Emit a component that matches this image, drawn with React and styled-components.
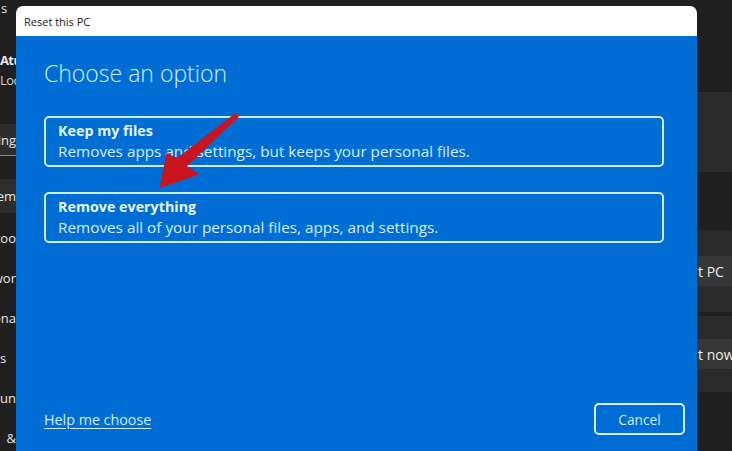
import React from 'react';
import styled, { createGlobalStyle } from 'styled-components';

const GlobalStyle = createGlobalStyle`
  html, body {
    margin: 0;
    padding: 0;
    background: #1f1f1f;
    overflow: hidden;
  }
  body {
    font-family: "Open Sans", "Noto Sans", sans-serif;
  }
`;

const Page = styled.div`
  width: 732px;
  height: 451px;
  display: grid;
  grid-template-columns: 16px 681px 1fr;
  background: #1f1f1f;
  overflow: hidden;
`;

// ---- settings window behind the dialog ----
const LeftStrip = styled.div`
  display: flex;
  flex-direction: column;
  overflow: hidden;
  color: #e6e6e6;
  font-size: 13px;
`;

const Frag = styled.div`
  display: flex;
  justify-content: ${p => (p.$end ? 'flex-end' : 'flex-start')};
  align-items: center;
  white-space: nowrap;
  height: ${p => p.$h || 20}px;
  margin-top: ${p => p.$mt || 0}px;
  padding-left: ${p => p.$pl || 0}px;
  font-weight: ${p => (p.$bold ? 700 : 400)};
  font-size: ${p => p.$size || 13}px;
  letter-spacing: ${p => (p.$tight ? '-0.6px' : '0')};
  background: ${p => p.$bg || 'transparent'};
  border-bottom: ${p => (p.$line ? '1px solid #8a8a8a' : 'none')};
  color: ${p => (p.$dim ? '#cfcfcf' : 'inherit')};
`;

const RightStrip = styled.div`
  display: flex;
  flex-direction: column;
  overflow: hidden;
  padding-top: 92px;
`;

const Panel = styled.div`
  background: #2b2b2b;
  height: ${p => p.$h}px;
  display: flex;
  flex-direction: column;
  justify-content: center;
`;

const Gap = styled.div`
  height: ${p => p.$h}px;
`;

const GhostButton = styled.div`
  background: #373737;
  height: 30px;
  display: flex;
  align-items: center;
  white-space: nowrap;
  color: #ececec;
  font-size: 14px;
  padding-left: 1px;
`;

// ---- dialog ----
const Dialog = styled.div`
  margin-top: 6px;
  display: flex;
  flex-direction: column;
  border-radius: 7px 7px 0 0;
  overflow: hidden;
  height: 445px;
  position: relative;
`;

const TitleBar = styled.div`
  height: 30px;
  flex: none;
  background: #ffffff;
  color: #1a1a1a;
  font-size: 11px;
  display: flex;
  align-items: center;
  padding-left: 8px;
`;

const Body = styled.div`
  flex: 1;
  background: #006dd5;
  color: #d4f0ff;
  display: flex;
  flex-direction: column;
`;

const Heading = styled.h1`
  margin: 22px 0 0 28px;
  font-size: 23px;
  line-height: 30px;
  font-weight: 300;
  color: #d4f0ff;
`;

const OptionList = styled.div`
  margin: 28px 33px 0 28px;
  display: flex;
  flex-direction: column;
  gap: 25px;
`;

const OptionCard = styled.div`
  border: 2px solid #c9ecff;
  border-radius: 5px;
  padding: 3px 12px 4px;
  cursor: pointer;
`;

const OptionTitle = styled.div`
  font-weight: 700;
  font-size: 14.3px;
  line-height: 20px;
  color: #e4f6ff;
`;

const OptionDesc = styled.div`
  font-size: 15.3px;
  line-height: 20px;
`;

const Footer = styled.div`
  margin-top: auto;
  padding: 0 12px 16px 28px;
  display: flex;
  align-items: center;
  justify-content: space-between;
`;

const HelpLink = styled.a`
  color: #cdeeff;
  font-size: 14.3px;
  text-decoration: underline;
  text-underline-offset: 3px;
  cursor: pointer;
`;

const CancelButton = styled.button`
  width: 91px;
  height: 32px;
  border: 2px solid #d4f0ff;
  border-radius: 5px;
  background: transparent;
  color: #d4f0ff;
  font-family: inherit;
  font-size: 13.7px;
  cursor: pointer;
`;

// drawn in page coordinates; the dialog sits at (16, 6)
const Arrow = styled.svg`
  position: absolute;
  left: 118px;
  top: 96px;
  pointer-events: none;
`;

const options = [
  { title: 'Keep my files', desc: 'Removes apps and settings, but keeps your personal files.' },
  { title: 'Remove everything', desc: 'Removes all of your personal files, apps, and settings.' },
];

const navItems = ['too', 'wor', 'ona', 's', 'un', '&'];

export default function App() {
  return (
    <>
      <GlobalStyle />
      <Page>
        <LeftStrip>
          <Frag $h={16} $pl={1}>s</Frag>
          <Frag $bold $tight $h={20} $mt={34} $size={13}>Atu</Frag>
          <Frag $tight $h={18} $mt={1} $dim>Loc</Frag>
          <Frag $end $h={31} $mt={35} $bg="#2c2c2c" $line>ting</Frag>
          <Frag $end $h={34} $mt={23} $bg="#2d2d2d">em</Frag>
          {navItems.map((t, i) => (
            <Frag key={t} $end={t !== 's'} $h={20} $mt={i === 0 ? 15 : 20}>{t}</Frag>
          ))}
        </LeftStrip>

        <Dialog>
          <TitleBar>Reset this PC</TitleBar>
          <Body>
            <Heading>Choose an option</Heading>
            <OptionList>
              {options.map(o => (
                <OptionCard key={o.title}>
                  <OptionTitle>{o.title}</OptionTitle>
                  <OptionDesc>{o.desc}</OptionDesc>
                </OptionCard>
              ))}
            </OptionList>
            <Footer>
              <HelpLink>Help me choose</HelpLink>
              <CancelButton>Cancel</CancelButton>
            </Footer>
          </Body>
          <Arrow width="110" height="90" viewBox="134 102 110 90">
            <polygon
              fill="#c8141c"
              points="235.5,113 239,116.5 187,166 199,174.5 159.5,188 166.5,153 177,158"
            />
          </Arrow>
        </Dialog>

        <RightStrip>
          <Panel $h={80} />
          <Gap $h={58} />
          <Panel $h={82}>
            <GhostButton>t PC</GhostButton>
          </Panel>
          <Gap $h={4} />
          <Panel $h={76}>
            <GhostButton>t now</GhostButton>
          </Panel>
        </RightStrip>
      </Page>
    </>
  );
}
